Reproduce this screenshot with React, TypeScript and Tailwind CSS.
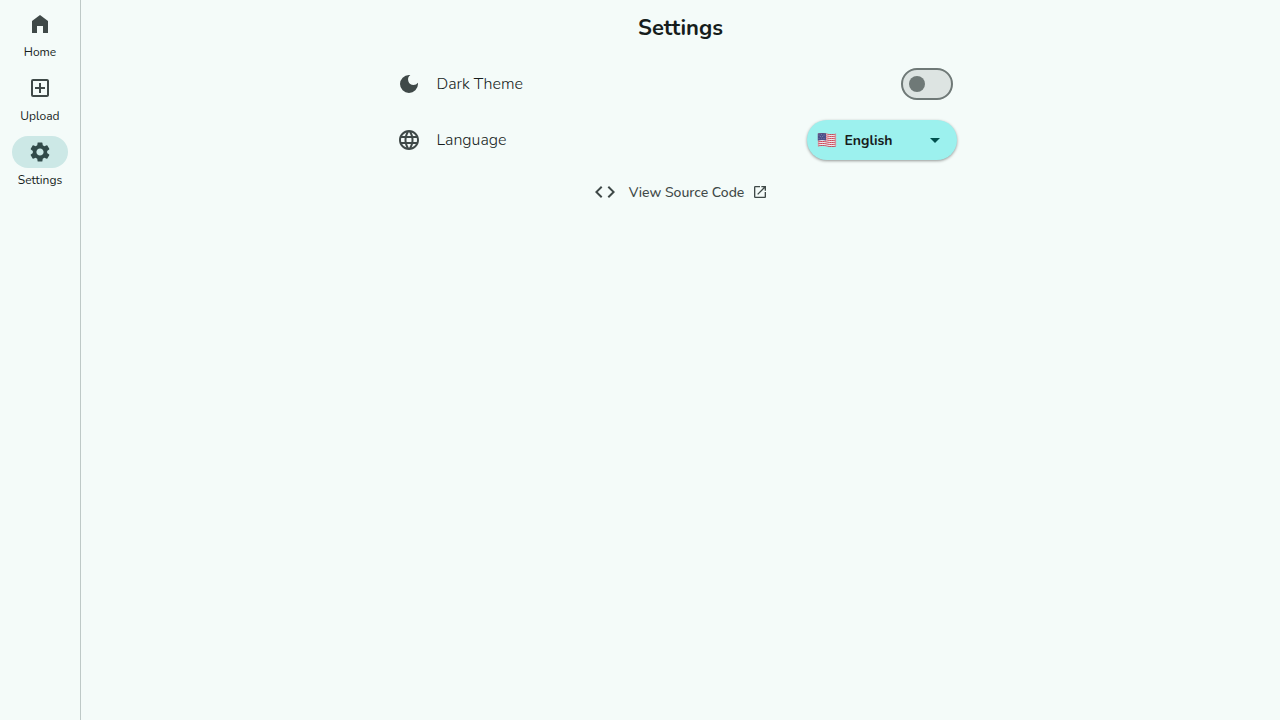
import { useState } from "react";
import {
  MdArrowDropDown,
  MdCode,
  MdDarkMode,
  MdLanguage,
  MdOpenInNew,
  MdOutlineAddBox,
  MdSettings,
} from "react-icons/md";
import type { ReactNode } from "react";

function HomeIcon() {
  return (
    <svg viewBox="0 0 24 24" className="size-6" fill="currentColor" aria-hidden="true">
      <path d="M4 21V9l8-6 8 6v12h-5v-7H9v7z" />
    </svg>
  );
}

function FlagIcon() {
  return (
    <svg viewBox="0 0 20 16" className="h-4 w-5" aria-hidden="true">
      <defs>
        <clipPath id="flag">
          <path d="M.8 1.500C4 .7 7 .8 10 1.500S16 2.300 19.200 1.400V14.500C16 15.300 13 15.200 10 14.500S4 13.700.8 14.600Z" />
        </clipPath>
      </defs>
      <g clipPath="url(#flag)">
        <path fill="#ececef" d="M0 0h20v16H0z" />
        <g fill="none" stroke="#cf4557" strokeWidth="1">
          <path d="M.8 2C4 1.200 7 1.300 10 2S16 2.800 19.200 1.900" />
          <path d="M.8 4C4 3.200 7 3.300 10 4S16 4.800 19.200 3.900" />
          <path d="M.8 6C4 5.200 7 5.300 10 6S16 6.800 19.200 5.900" />
          <path d="M.8 8C4 7.200 7 7.300 10 8S16 8.800 19.200 7.900" />
          <path d="M.8 10C4 9.200 7 9.300 10 10S16 10.800 19.200 9.900" />
          <path d="M.8 12C4 11.200 7 11.300 10 12S16 12.800 19.200 11.900" />
          <path d="M.8 14.100C4 13.300 7 13.400 10 14.100S16 14.900 19.200 14" />
        </g>
        <path fill="#4c4f8a" d="M0 0h9v8.400C6 7.600 3.500 7.800.8 8.500H0z" />
        <g fill="#b9bbd5">
          <circle cx="2" cy="3" r=".4" /><circle cx="4.500" cy="2.700" r=".4" /><circle cx="7" cy="3" r=".4" />
          <circle cx="3.200" cy="4.500" r=".4" /><circle cx="5.800" cy="4.500" r=".4" />
          <circle cx="2" cy="6.400" r=".4" /><circle cx="4.500" cy="6.100" r=".4" /><circle cx="7" cy="6.400" r=".4" />
        </g>
        <path
          fill="none"
          stroke="#6d5360"
          strokeOpacity=".5"
          strokeWidth=".7"
          d="M.8 1.500C4 .7 7 .8 10 1.500S16 2.300 19.200 1.400V14.500C16 15.300 13 15.200 10 14.500S4 13.700.8 14.600Z"
        />
      </g>
    </svg>
  );
}

function NavItem({ label, icon, active = false }: { label: string; icon: ReactNode; active?: boolean }) {
  return (
    <a href="#" aria-current={active ? "page" : undefined} className="flex h-16 flex-col items-center gap-1">
      <span
        className={
          active
            ? "flex h-8 w-14 items-center justify-center rounded-full bg-[#cce8e6] text-[#324b4a]"
            : "flex h-8 w-14 items-center justify-center text-[#3f4948]"
        }
      >
        {icon}
      </span>
      <span className="text-xs leading-4">{label}</span>
    </a>
  );
}

export default function App() {
  const [dark, setDark] = useState(false);
  const [language, setLanguage] = useState("en");

  return (
    <div className="flex min-h-screen bg-[#f4fbf9] font-[Nunito,'Open_Sans',sans-serif] text-[#161d1c]">
      <nav aria-label="Main" className="w-[81px] shrink-0 border-r border-[#bec9c7] pt-2">
        <NavItem label="Home" icon={<HomeIcon />} />
        <NavItem label="Upload" icon={<MdOutlineAddBox className="size-6" />} />
        <NavItem label="Settings" active icon={<MdSettings className="size-6" />} />
      </nav>

      <main className="flex flex-1 flex-col items-center px-4">
        <h1 className="flex h-14 items-center text-[22px] leading-7 font-bold">Settings</h1>

        <div className="w-full max-w-[568px] pr-2">
          <div className="flex h-14 items-center">
            <MdDarkMode className="size-6 text-[#3f4948]" aria-hidden="true" />
            <label htmlFor="dark-theme" className="ml-4 flex-1 font-light">
              Dark Theme
            </label>
            <input
              id="dark-theme"
              type="checkbox"
              role="switch"
              checked={dark}
              onChange={(event) => setDark(event.target.checked)}
              className="mr-1 flex h-8 w-[52px] cursor-pointer appearance-none items-center rounded-full border-2 border-[#6f7977] bg-[#dde4e2] px-1.5 before:size-4 before:rounded-full before:bg-[#6f7977] checked:justify-end checked:bg-[#9cf1ee]"
            />
          </div>

          <div className="flex h-14 items-center">
            <MdLanguage className="size-6 text-[#3f4948]" aria-hidden="true" />
            <label htmlFor="language" className="ml-4 flex-1 font-light">
              Language
            </label>
            <div className="grid h-10 w-[150px] items-center rounded-full bg-[#9cf1ee] shadow-[0_1px_3px_rgba(0,0,0,0.4)]">
              <select
                id="language"
                value={language}
                onChange={(event) => setLanguage(event.target.value)}
                className="col-start-1 row-start-1 h-10 w-full cursor-pointer appearance-none rounded-full bg-transparent pt-0.5 pl-[38px] text-sm font-bold"
              >
                <option value="en">English</option>
              </select>
              <span className="pointer-events-none col-start-1 row-start-1 flex items-center justify-between px-2.5">
                <FlagIcon />
                <MdArrowDropDown className="size-6 text-[#00504e]" aria-hidden="true" />
              </span>
            </div>
          </div>
        </div>

        <a href="#" className="flex h-12 items-center text-sm leading-[21px] font-medium text-[#3f4948]">
          <MdCode className="mr-3 size-6" aria-hidden="true" />
          View Source Code
          <MdOpenInNew className="ml-2 size-4" aria-hidden="true" />
        </a>
      </main>
    </div>
  );
}
